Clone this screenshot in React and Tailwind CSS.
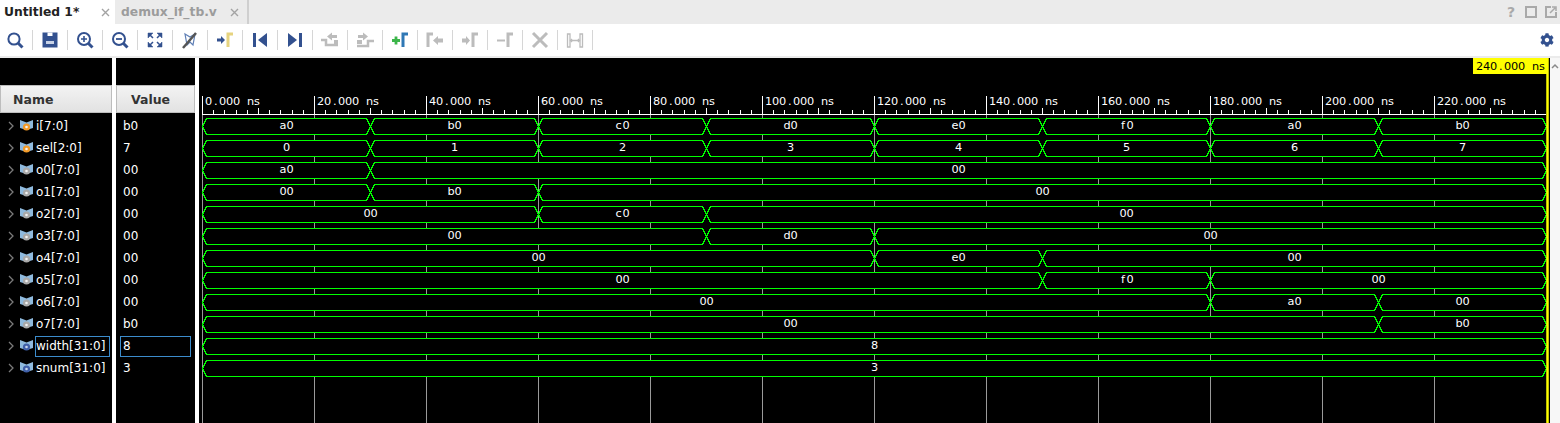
import React from "react";
import { FaCog } from "react-icons/fa";

const NAVY = "#33518f";
const GRAY = "#bcbcbc";
const GREEN = "#00ff00";
const CELL = 7;

// one signal row = 22px, one 20ns = 112px on the wave canvas
const T = [202.5, 370.5, 538.5, 706.5, 874.5, 1042.5, 1210.5, 1378.5, 1546.5];

const pulse = (idx, val) => {
  // zero everywhere except one 30ns slot
  const out = [];
  if (idx > 0) out.push([T[0], T[idx], "00"]);
  out.push([T[idx], T[idx + 1], val]);
  if (idx < 7) out.push([T[idx + 1], T[8], "00"]);
  return out;
};

const ROWS = [
  { name: "i[7:0]", value: "b0", kind: "in", segs: ["a0", "b0", "c0", "d0", "e0", "f0", "a0", "b0"].map((v, i) => [T[i], T[i + 1], v]) },
  { name: "sel[2:0]", value: "7", kind: "in", segs: ["0", "1", "2", "3", "4", "5", "6", "7"].map((v, i) => [T[i], T[i + 1], v]) },
  { name: "o0[7:0]", value: "00", kind: "out", segs: pulse(0, "a0") },
  { name: "o1[7:0]", value: "00", kind: "out", segs: pulse(1, "b0") },
  { name: "o2[7:0]", value: "00", kind: "out", segs: pulse(2, "c0") },
  { name: "o3[7:0]", value: "00", kind: "out", segs: pulse(3, "d0") },
  { name: "o4[7:0]", value: "00", kind: "out", segs: pulse(4, "e0") },
  { name: "o5[7:0]", value: "00", kind: "out", segs: pulse(5, "f0") },
  { name: "o6[7:0]", value: "00", kind: "out", segs: pulse(6, "a0") },
  { name: "o7[7:0]", value: "b0", kind: "out", segs: pulse(7, "b0") },
  { name: "width[31:0]", value: "8", kind: "param", selected: true, segs: [[T[0], T[8], "8"]] },
  { name: "snum[31:0]", value: "3", kind: "param", segs: [[T[0], T[8], "3"]] },
];

const Gamma = ({ x = 14, color }) => <path d={`M${x} 18V5h5`} fill="none" stroke={color} strokeWidth="3" />;

const TOOLS = [
  <g key="search" fill="none" stroke={NAVY}><circle cx="10" cy="10" r="5.6" strokeWidth="2" /><path d="M14 14l4.500 4.500" strokeWidth="3" /></g>,
  <g key="save"><path d="M3.500 3.500h15v15h-15z" fill={NAVY} /><path d="M8.500 3.500h5v3.500h-5z" fill="#fff" /><path d="M7 12h8v3H7z" fill="#c9d3e6" /></g>,
  <g key="zoomin" fill="none" stroke={NAVY}><circle cx="10" cy="10" r="6" strokeWidth="2" /><path d="M7 10h6M10 7v6" strokeWidth="1.600" /><path d="M14.500 14.500l4 4" strokeWidth="3" /></g>,
  <g key="zoomout" fill="none" stroke={NAVY}><circle cx="10" cy="10" r="6" strokeWidth="2" /><path d="M7 10h6" strokeWidth="1.800" /><path d="M14.500 14.500l4 4" strokeWidth="3" /></g>,
  <g key="fit" fill={NAVY} stroke={NAVY}>
    <path d="M4 4h5L4 9zM18 4h-5l5 5zM4 18h5l-5-5zM18 18h-5l5-5z" strokeWidth="0.500" />
    <path d="M6 6l3 3M16 6l-3 3M6 16l3-3M16 16l-3-3" strokeWidth="1.500" />
  </g>,
  <g key="snap" fill="none"><path d="M6 5l5 3 5-3-2 11-3-3-3 3z" stroke="#5f7fb5" strokeWidth="1.200" /><path d="M4 19L17 4" stroke="#555" strokeWidth="2.500" /></g>,
  <g key="cursor"><path d="M3 9.500h4V7l4 4-4 4v-2.500H3z" fill={NAVY} /><Gamma color="#e6d37f" /></g>,
  <g key="first"><path d="M4 4h3v14H4z" fill={NAVY} /><path d="M18 4v14l-9-7z" fill={NAVY} /></g>,
  <g key="last"><path d="M15 4h3v14h-3z" fill={NAVY} /><path d="M4 4v14l9-7z" fill={NAVY} /></g>,
  <g key="prevedge"><path d="M2 11h5v5h12" fill="none" stroke={GRAY} strokeWidth="2.500" /><path d="M18 6h-5V3.500l-5 4 5 4V9h5z" fill={GRAY} /><path d="M15 16V11h4v5z" fill={GRAY} /></g>,
  <g key="nextedge"><path d="M3 17h11v-5h6" fill="none" stroke={GRAY} strokeWidth="2.500" /><path d="M4 6h5V3.500l5 4-5 4V9H4z" fill={GRAY} /><path d="M3 11h5v4H3z" fill={GRAY} /></g>,
  <g key="addmarker"><path d="M3 11.500h8M7 7.500v8" stroke="#3cb54a" strokeWidth="2.800" /><Gamma color="#2f78b5" /></g>,
  <g key="prevmarker"><Gamma x={4} color={GRAY} /><path d="M19 9.500h-5V7l-5 4.500 5 4.500v-2.500h5z" fill={GRAY} /></g>,
  <g key="nextmarker"><path d="M3 9.500h4V7l4 4.500L7 16v-2.500H3z" fill={GRAY} /><Gamma color={GRAY} /></g>,
  <g key="delmarker"><path d="M3 11.500h8" stroke={GRAY} strokeWidth="2" /><Gamma color={GRAY} /></g>,
  <path key="x" d="M4 4l14 14M18 4L4 18" stroke={GRAY} strokeWidth="3" fill="none" />,
  <g key="swap" fill="none" stroke={GRAY} strokeWidth="1.300"><path d="M3.500 5h2.500v13H3.500zM16 5h2.500v13H16z" /><path d="M7 11.500h8M8 10l-1.500 1.500L8 13M14 10l1.500 1.500L14 13" /></g>,
];

function CloseX({ className }) {
  return (
    <svg width="9" height="9" viewBox="0 0 9 9" className={className}>
      <path d="M1 1l7 7M8 1L1 8" stroke="#a3a3a3" strokeWidth="1.400" fill="none" />
    </svg>
  );
}

function SignalIcon({ kind }) {
  const dot = { in: "#f29a28", out: "#a9a9a9", param: "#3f5fa8" }[kind];
  return (
    <svg width="13" height="12" viewBox="0 0 13 12" className="shrink-0">
      <path d="M0 0l6.500 2.500L13 0v8l-6.500 2L0 8z" fill="#8fbade" />
      <circle cx="6.500" cy="7" r="3.600" fill={dot} />
      <circle cx="6.500" cy="7" r="1.300" fill={kind === "param" ? "#c9d6ee" : "#f3f3f3"} />
    </svg>
  );
}

function ColumnHead({ children, className }) {
  return (
    <div className={`h-[28px] flex items-center pt-[2px] bg-gradient-to-b from-[#f3f3f3] to-[#e2e2e2] border border-[#bdbdbd] text-[12.500px] font-bold text-[#333] ${className}`}>
      {children}
    </div>
  );
}

// the viewer paints text in fixed cells, so every glyph gets its own x
function CellText({ x, y, fill = "#fff", children }) {
  const nudge = { ".": 2, f: 1.5 };
  const xs = [...children].map((ch, i) => x + i * CELL + (nudge[ch] || 0));
  return (
    <text x={xs.join(" ")} y={y} fontSize="11.300" fill={fill}>{children}</text>
  );
}

function Waves() {
  const grid = Array.from({ length: 12 }, (_, i) => 202.5 + i * 112);
  const ticks = Array.from({ length: 120 }, (_, i) => i).filter((i) => i % 10 !== 0);
  return (
    <svg width="1351" height="365" viewBox="199 58 1351 365" className="block font-['DejaVu_Sans',sans-serif]">
      {grid.map((x) => (
        <path key={x} d={`M${x} 114V423`} stroke="#9a9a9a" />
      ))}
      {grid.map((x, i) => (
        <g key={x}>
          <path d={`M${x} 96V115`} stroke="#fff" />
          <CellText x={x + 2.5} y={105}>{`${(i * 20).toFixed(3)} ns`}</CellText>
        </g>
      ))}
      <path d="M202 114.500H1546" stroke="#fff" />
      {ticks.map((i) => (
        <path key={i} d={`M${202.5 + i * 11.2} ${i % 5 === 0 ? 108 : 110}V114`} stroke="#fff" shapeRendering="crispEdges" />
      ))}
      {ROWS.map((row, r) => {
        const top = 118.5 + r * 22;
        const mid = top + 8;
        const bot = top + 16;
        return row.segs.map(([s, e, label]) => (
          <g key={`${r}-${s}`}>
            <polygon
              points={`${s},${mid} ${s + 4},${top} ${e - 4},${top} ${e},${mid} ${e - 4},${bot} ${s + 4},${bot}`}
              fill="#000"
              stroke={GREEN}
              shapeRendering="crispEdges"
            />
            <CellText x={(s + e) / 2 - (label.length * CELL) / 2} y={top + 10.5}>{label}</CellText>
          </g>
        ));
      })}
      <path d="M1547.500 58V423" stroke="#ffff00" strokeWidth="2.500" />
      <rect x="1473" y="58" width="74" height="16" fill="#ffff00" />
      <CellText x={1476} y={70} fill="#000">240.000 ns</CellText>
    </svg>
  );
}

export default function App() {
  return (
    <div className="w-[1560px] h-[423px] overflow-hidden bg-white font-['DejaVu_Sans',sans-serif]">
      {/* tab strip */}
      <div className="h-6 bg-[#ebebeb] flex items-stretch">
        <div className="w-[115px] bg-white flex items-center pl-[4px] pr-[5px] justify-between text-[12.300px] font-bold text-[#222]">
          <span>Untitled 1*</span>
          <CloseX />
        </div>
        <div className="w-[134px] flex items-center pl-[6px] pr-[8px] justify-between text-[12.300px] font-bold text-[#9c9c9c] border-r-2 border-[#cfcfcf]">
          <span>demux_if_tb.v</span>
          <CloseX />
        </div>
        <div className="ml-auto flex items-center gap-[8px] pr-[3px] text-[#a9a9a9]">
          <span className="w-[12px] text-center text-[14px] font-bold">?</span>
          <svg width="12" height="12" viewBox="0 0 12 12"><rect x="1" y="1" width="10" height="10" fill="none" stroke="#a9a9a9" strokeWidth="2" /></svg>
          <svg width="12" height="12" viewBox="0 0 12 12"><path d="M6 1H1v10h10V6" fill="none" stroke="#a9a9a9" strokeWidth="2" /><path d="M5 7l5-5M7 1h4v4" fill="none" stroke="#a9a9a9" strokeWidth="1.500" /></svg>
        </div>
      </div>

      {/* toolbar */}
      <div className="h-[32px] flex items-center">
        {TOOLS.map((icon, i) => (
          <React.Fragment key={i}>
            <div className="w-[30px] flex justify-center">
              <svg width="22" height="22" viewBox="0 0 22 22">{icon}</svg>
            </div>
            <div className="w-px h-[20px] mx-[2px] bg-[#d6d6d6]" />
          </React.Fragment>
        ))}
        <FaCog className="ml-auto mr-[6px]" size={14} color={NAVY} />
      </div>
      <div className="h-[2px] bg-[#ebebeb]" />

      {/* waveform viewer */}
      <div className="h-[365px] flex bg-white">
        <div className="w-[112px] bg-black shrink-0">
          <div className="h-[27px]" />
          <ColumnHead className="pl-[12px]">Name</ColumnHead>
          <div className="pt-[2px]">
            {ROWS.map((row) => (
              <div key={row.name} className="h-[22px] flex items-center text-[12px] text-white">
                <svg width="6" height="10" viewBox="0 0 6 10" className="ml-[8px] mr-[6px] shrink-0">
                  <path d="M1 1l4 4-4 4" fill="none" stroke="#7a7a7a" strokeWidth="1.300" />
                </svg>
                <SignalIcon kind={row.kind} />
                <span className={`ml-[2px] w-[75px] h-[21px] leading-[19px] whitespace-nowrap border ${row.selected ? "border-[#3c8ccc]" : "border-transparent"}`}>
                  {row.name}
                </span>
              </div>
            ))}
          </div>
        </div>

        <div className="w-[79px] ml-[4px] bg-black shrink-0">
          <div className="h-[27px]" />
          <ColumnHead className="pl-[14px]">Value</ColumnHead>
          <div className="pt-[2px]">
            {ROWS.map((row) => (
              <div key={row.name} className="h-[22px] flex items-center text-[12px] text-white">
                <span className={`ml-[4px] w-[71px] h-[21px] leading-[19px] pl-[2px] border ${row.selected ? "border-[#3c8ccc]" : "border-transparent"}`}>
                  {row.value}
                </span>
              </div>
            ))}
          </div>
        </div>

        <div className="ml-[4px] w-[1351px] bg-black shrink-0">
          <Waves />
        </div>

        <div className="flex-1 bg-[#f7f7f7] flex justify-center pt-[5px]">
          <svg width="8" height="6" viewBox="0 0 8 6"><path d="M1 5l3-3 3 3" fill="none" stroke="#8a8a8a" strokeWidth="1.500" /></svg>
        </div>
      </div>
    </div>
  );
}
